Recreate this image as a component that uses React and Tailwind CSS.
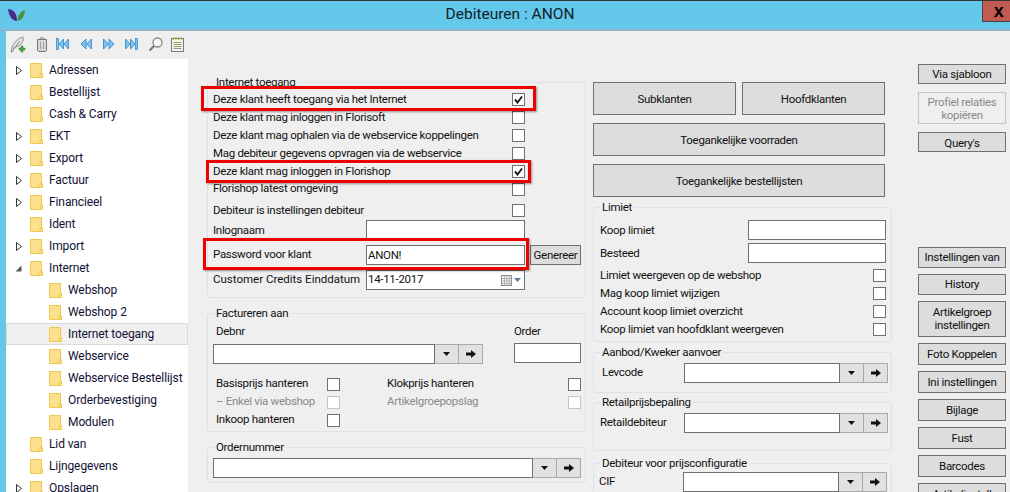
const treeItems = [
  { label: "Adressen", arrow: "closed" },
  { label: "Bestellijst" },
  { label: "Cash & Carry" },
  { label: "EKT", arrow: "closed" },
  { label: "Export", arrow: "closed" },
  { label: "Factuur", arrow: "closed" },
  { label: "Financieel", arrow: "closed" },
  { label: "Ident" },
  { label: "Import", arrow: "closed" },
  { label: "Internet", arrow: "open" },
  { label: "Webshop", child: true },
  { label: "Webshop 2", child: true },
  { label: "Internet toegang", child: true, selected: true },
  { label: "Webservice", child: true },
  { label: "Webservice Bestellijst", child: true },
  { label: "Orderbevestiging", child: true },
  { label: "Modulen", child: true },
  { label: "Lid van" },
  { label: "Lijngegevens" },
  { label: "Opslagen", arrow: "closed" },
]

function Folder() {
  return (
    <svg width="13" height="15" viewBox="0 0 13 15" className="shrink-0">
      <path d="M0.5 0.5H11.5V10.5H12.5V14.5H0.5Z" fill="#fde08d" stroke="#efc94c" />
      <path d="M10 14V11H12" fill="none" stroke="#efc94c" />
    </svg>
  )
}

function TreeRow({ item }) {
  return (
    <div
      className={`h-[22px] flex items-center border ${
        item.selected ? "bg-[#f0f0f0] border-[#dadada]" : "border-transparent"
      }`}
    >
      <div className={`flex items-center shrink-0 ${item.child ? "w-[42px]" : "w-[23px]"}`}>
        {item.arrow === "closed" && (
          <svg width="6" height="9" viewBox="0 0 6 9" className="ml-[9px]">
            <path d="M0.5 0.5L5.5 4.5L0.5 8.5Z" fill="white" stroke="#333" />
          </svg>
        )}
        {item.arrow === "open" && (
          <svg width="7" height="7" viewBox="0 0 7 7" className="ml-[8px]">
            <path d="M6.5 0.5V6.5H0.5Z" fill="#595959" />
          </svg>
        )}
      </div>
      <Folder />
      <span className="ml-[6px] text-[12px] tracking-[-0.1px] text-[#111133] whitespace-nowrap">
        {item.label}
      </span>
    </div>
  )
}

function ToolbarIcons() {
  return (
    <div className="h-[28px] flex items-center pl-[4px] pb-[2px] shrink-0">
      <svg width="16" height="17" viewBox="0 0 16 17">
        <path d="M1 16C2 9 6 3 13 1C14 5 11 10 5 11L2 16Z" fill="#e6e6e6" stroke="#8a8a8a" />
        <path d="M3 14L10 5" stroke="#8a8a8a" fill="none" />
        <path d="M11 10H13V12H15V14H13V16H11V14H9V12H11Z" fill="#45a846" stroke="#2d7d32" strokeWidth="0.5" />
      </svg>
      <svg width="10" height="15" viewBox="0 0 10 15" className="ml-[11px]">
        <path d="M3 1H7V2.5H3Z" fill="none" stroke="#888" />
        <path d="M0.5 2.5H9.5V13L8.5 14.5H1.5L0.5 13Z" fill="#d8d8d2" stroke="#777" />
        <path d="M3.5 5V12M6.5 5V12" stroke="#a0a0a0" />
      </svg>
      <svg width="13" height="12" viewBox="0 0 13 12" className="ml-[9px]">
        <rect x="0.5" y="0.5" width="2" height="11" fill="#7cc4ee" stroke="#2a83c9" strokeWidth="0.7" />
        <path d="M7.5 1V11L3 6ZM12.5 1V11L8 6Z" fill="#7cc4ee" stroke="#2a83c9" strokeWidth="0.8" />
      </svg>
      <svg width="12" height="12" viewBox="0 0 12 12" className="ml-[11px]">
        <path d="M6 1V11L1 6ZM11.5 1V11L6.5 6Z" fill="#7cc4ee" stroke="#2a83c9" strokeWidth="0.8" />
      </svg>
      <svg width="12" height="12" viewBox="0 0 12 12" className="ml-[11px]">
        <path d="M0.5 1V11L5.5 6ZM6 1V11L11 6Z" fill="#7cc4ee" stroke="#2a83c9" strokeWidth="0.8" />
      </svg>
      <svg width="13" height="12" viewBox="0 0 13 12" className="ml-[10px]">
        <path d="M0.5 1V11L5 6ZM5.5 1V11L10 6Z" fill="#7cc4ee" stroke="#2a83c9" strokeWidth="0.8" />
        <rect x="10.5" y="0.5" width="2" height="11" fill="#7cc4ee" stroke="#2a83c9" strokeWidth="0.7" />
      </svg>
      <svg width="15" height="15" viewBox="0 0 15 15" className="ml-[10px]">
        <circle cx="9.5" cy="5.5" r="4.5" fill="#f4f4f4" stroke="#888" strokeWidth="1.3" />
        <path d="M6 9L1.5 13.5" stroke="#777" strokeWidth="2.2" />
      </svg>
      <svg width="13" height="15" viewBox="0 0 13 15" className="ml-[8px]">
        <rect x="0.5" y="1.5" width="12" height="13" fill="#fdf6cf" stroke="#5d7ea6" />
        <path d="M2.5 0V3M5 0V3M7.5 0V3M10 0V3" stroke="#c9a227" />
        <path d="M2.5 5.5H10.5M2.5 7.5H10.5M2.5 9.5H10.5M2.5 11.5H10.5" stroke="#8a94a0" />
      </svg>
    </div>
  )
}

function Check({ checked, disabled }) {
  return (
    <div
      className={`w-[13px] h-[13px] shrink-0 border bg-white flex items-center justify-center ${
        disabled ? "border-[#c4c4c4]" : "border-[#707070]"
      }`}
    >
      {checked && (
        <svg width="9" height="9" viewBox="0 0 9 9">
          <path d="M1 4.5L3.5 7.5L8 1.5" fill="none" stroke="#222" strokeWidth="2" />
        </svg>
      )}
    </div>
  )
}

function Group({ title, className, children }) {
  return (
    <div className={`relative border border-[#dce2e7] rounded-[3px] ${className}`}>
      <span className="absolute -top-[9px] left-[6px] px-[2px] bg-[#efefef] leading-[16px] whitespace-nowrap">
        {title}
      </span>
      {children}
    </div>
  )
}

function CheckRow({ label, checked, textClass = "pt-[2px]", className = "" }) {
  return (
    <div className={`h-[18px] flex items-center justify-between ${className}`}>
      <span className={`whitespace-nowrap ${textClass}`}>{label}</span>
      <Check checked={checked} />
    </div>
  )
}

function TextBox({ className, children }) {
  return (
    <div className={`h-[20px] bg-white border border-[#707070] flex items-center px-[1px] ${className}`}>
      {children}
    </div>
  )
}

function Lookup({ inputWidth }) {
  return (
    <div className="flex h-[20px]">
      <TextBox className={inputWidth} />
      <div className="w-[24px] border border-l-0 border-[#a8a8a8] bg-[#e1e1e1] flex items-center justify-center">
        <svg width="7" height="4" viewBox="0 0 7 4">
          <path d="M0 0H7L3.5 4Z" fill="#111" />
        </svg>
      </div>
      <div className="w-[24px] border border-l-0 border-[#a8a8a8] bg-[#e1e1e1] flex items-center justify-center">
        <svg width="10" height="8" viewBox="0 0 10 8">
          <path d="M0 2.5H5V0L10 4L5 8V5.5H0Z" fill="#111" />
        </svg>
      </div>
    </div>
  )
}

function Btn({ className = "", disabled, children }) {
  return (
    <div
      className={`border flex items-center justify-center text-center leading-[13px] ${
        disabled ? "bg-[#efefef] border-[#c4c4c4] text-[#8a8a8a]" : "bg-[#dddddd] border-[#707070]"
      } ${className}`}
    >
      {children}
    </div>
  )
}

function LeftColumn() {
  return (
    <div className="w-[379px] ml-[19px] pt-[51px] shrink-0">
      <Group title="Internet toegang" className="h-[216px] pl-[5px] pt-[7px]">
        <div className="w-[312px]">
          <CheckRow label="Deze klant heeft toegang via het Internet" checked />
          <CheckRow label="Deze klant mag inloggen in Florisoft" />
          <CheckRow label="Deze klant mag ophalen via de webservice koppelingen" />
          <CheckRow label="Mag debiteur gegevens opvragen via de webservice" />
          <CheckRow label="Deze klant mag inloggen in Florishop" checked />
          <CheckRow label="Florishop latest omgeving" textClass="" />
          <CheckRow label="Debiteur is instellingen debiteur" className="mt-[3px]" />
        </div>
        <div className="flex items-center h-[20px] mt-[1px]">
          <span className="w-[153px] whitespace-nowrap pt-[2px]">Inlognaam</span>
          <TextBox className="w-[159px]" />
        </div>
        <div className="flex items-center h-[20px] mt-[5px]">
          <span className="w-[153px] whitespace-nowrap">Password voor klant</span>
          <TextBox className="w-[159px]">
            <span className="pt-[2px]">ANON!</span>
          </TextBox>
          <Btn className="w-[51px] h-[20px] ml-[5px]">Genereer</Btn>
        </div>
        <div className="flex items-center h-[20px] mt-[5px]">
          <span className="w-[153px] whitespace-nowrap tracking-normal">Customer Credits Einddatum</span>
          <TextBox className="w-[159px] justify-between pr-[3px]">
            <span>14-11-2017</span>
            <span className="flex items-center gap-[2px]">
              <svg width="11" height="11" viewBox="0 0 11 11">
                <rect x="0.5" y="0.5" width="10" height="10" fill="#eee" stroke="#8c8c8c" />
                <path d="M0 3.5H11M0 6H11M0 8.5H11M3.5 1V11M6 1V11M8.5 1V11" stroke="#a4a4a4" strokeWidth="0.7" />
              </svg>
              <svg width="7" height="4" viewBox="0 0 7 4">
                <path d="M0 0H7L3.5 4Z" fill="#5a7aa0" />
              </svg>
            </span>
          </TextBox>
        </div>
      </Group>

      <Group title="Factureren aan" className="h-[119px] mt-[15px] pl-[5px]">
        <div className="flex justify-between pr-[4px] pt-[9px]">
          <div className="flex-1">
            <div className="h-[18px] pl-[3px] flex items-center">Debnr</div>
            <div className="mt-[3px]">
              <Lookup inputWidth="w-[222px]" />
            </div>
          </div>
          <div className="w-[67px]">
            <div className="h-[18px] flex items-center">Order</div>
            <TextBox className="w-[67px] mt-[2px]" />
          </div>
        </div>
        <div className="flex pl-[3px] pt-[11px]">
          <div className="w-[124px]">
            <CheckRow label="Basisprijs hanteren" textClass="" />
            <div className="h-[18px] flex items-center justify-between text-[#8a8a8a]">
              <span className="whitespace-nowrap">– Enkel via webshop</span>
              <Check disabled />
            </div>
            <CheckRow label="Inkoop hanteren" textClass="" />
          </div>
          <div className="w-[194px] ml-[47px]">
            <CheckRow label="Klokprijs hanteren" textClass="" />
            <div className="h-[18px] flex items-center justify-between text-[#8a8a8a]">
              <span>Artikelgroepopslag</span>
              <Check disabled />
            </div>
          </div>
        </div>
      </Group>

      <Group title="Ordernummer" className="h-[36px] mt-[15px] pl-[5px] pt-[10px]">
        <Lookup inputWidth="w-[320px]" />
      </Group>
    </div>
  )
}

function MiddleColumn() {
  return (
    <div className="w-[299px] ml-[7px] pt-[51px] shrink-0">
      <div className="flex gap-[6px] w-[292px]">
        <Btn className="w-[143px] h-[33px] pt-[2px]">Subklanten</Btn>
        <Btn className="w-[143px] h-[33px] pt-[2px]">Hoofdklanten</Btn>
      </div>
      <Btn className="w-[292px] h-[33px] mt-[8px] pt-[2px]">Toegankelijke voorraden</Btn>
      <Btn className="w-[292px] h-[33px] mt-[8px] pt-[2px]">Toegankelijke bestellijsten</Btn>

      <Group title="Limiet" className="h-[135px] mt-[10px] pl-[6px] pt-[12px]">
        <div className="w-[286px]">
          <div className="flex items-center justify-between h-[20px]">
            <span className="pt-[2px]">Koop limiet</span>
            <TextBox className="w-[138px]" />
          </div>
          <div className="flex items-center justify-between h-[20px] mt-[3px]">
            <span className="pt-[2px]">Besteed</span>
            <TextBox className="w-[138px]" />
          </div>
          <CheckRow label="Limiet weergeven op de webshop" className="mt-[3px]" />
          <CheckRow label="Mag koop limiet wijzigen" />
          <CheckRow label="Account koop limiet overzicht" />
          <CheckRow label="Koop limiet van hoofdklant weergeven" />
        </div>
      </Group>

      <Group title="Aanbod/Kweker aanvoer" className="h-[41px] mt-[10px] pl-[8px] pt-[10px]">
        <div className="flex items-center">
          <span className="w-[82px]">Levcode</span>
          <Lookup inputWidth="w-[156px]" />
        </div>
      </Group>

      <Group title="Retailprijsbepaling" className="h-[49px] mt-[9px] pl-[6px] pt-[10px]">
        <div className="flex items-center">
          <span className="w-[84px]">Retaildebiteur</span>
          <Lookup inputWidth="w-[156px]" />
        </div>
      </Group>

      <Group title="Debiteur voor prijsconfiguratie" className="h-[60px] mt-[12px] pl-[5px] pt-[8px]">
        <div className="flex items-center">
          <span className="w-[84px]">CIF</span>
          <Lookup inputWidth="w-[156px]" />
        </div>
      </Group>
    </div>
  )
}

function RightColumn() {
  return (
    <div className="w-[88px] ml-[26px] pt-[33px] shrink-0">
      <Btn className="h-[20px]">Via sjabloon</Btn>
      <Btn disabled className="h-[32px] mt-[8px] pt-[2px]">
        Profiel relaties
        <br />
        kopiëren
      </Btn>
      <Btn className="h-[20px] mt-[8px] pt-[2px]">Query's</Btn>
      <Btn className="h-[21px] mt-[95px]">Instellingen van</Btn>
      <Btn className="h-[21px] mt-[6px]">History</Btn>
      <Btn className="h-[36px] mt-[6px]">
        Artikelgroep
        <br />
        instellingen
      </Btn>
      <Btn className="h-[22px] mt-[6px]">Foto Koppelen</Btn>
      <Btn className="h-[22px] mt-[6px]">Ini instellingen</Btn>
      <Btn className="h-[22px] mt-[6px]">Bijlage</Btn>
      <Btn className="h-[22px] mt-[6px]">Fust</Btn>
      <Btn className="h-[22px] mt-[6px]">Barcodes</Btn>
      <Btn className="h-[22px] mt-[6px]">Artikelinstell</Btn>
    </div>
  )
}

export default function App() {
  return (
    <div className="relative w-[1010px] h-[492px] overflow-hidden bg-[#efefef] text-[11.5px] text-[#111] font-['Roboto',sans-serif] tracking-[-0.3px]">
      <div className="relative h-[31px] bg-[#64c8ea] border-t border-[#333] border-b-[2px] border-b-[#8fb5c6] flex items-center justify-center pl-[10px]">
        <svg width="17" height="12" viewBox="0 0 17 12" className="absolute left-[8px] top-[8px]">
          <path d="M0 0C5 0 9 4 9 12C4 12 1 7 0 0Z" fill="#4b2a8c" />
          <path d="M17 1C17 6 14 11 10 12C9 7 12 3 17 1Z" fill="#4f8f3c" />
        </svg>
        <span className="text-[15.5px] tracking-normal text-[#10222b]">Debiteuren : ANON</span>
        <div className="absolute right-0 top-0 w-[28px] h-[21px] bg-[#c15a50] border-l border-b border-[#444] flex items-center justify-center pl-[4px] text-[18px] leading-none font-bold text-black font-['Liberation_Sans',sans-serif]">
          x
        </div>
      </div>

      <div className="flex h-[461px]">
        <div className="w-[6px] bg-[#64c8ea] shrink-0" />
        <div className="w-[182px] shrink-0 flex flex-col">
          <ToolbarIcons />
          <div className="bg-white flex-1">
            {treeItems.map((item) => (
              <TreeRow key={item.label} item={item} />
            ))}
          </div>
        </div>
        <LeftColumn />
        <MiddleColumn />
        <RightColumn />
      </div>

      {/* rode kaders uit de schermafbeelding */}
      <div className="absolute left-[201px] top-[86px] w-[335px] h-[25px] border-[3px] border-[#ee0000] shadow-[1px_1px_2px_rgba(0,0,0,0.4)]" />
      <div className="absolute left-[206px] top-[160px] w-[325px] h-[23px] border-[3px] border-[#ee0000] shadow-[1px_1px_2px_rgba(0,0,0,0.4)]" />
      <div className="absolute left-[203px] top-[238px] w-[326px] h-[32px] border-[3px] border-[#ee0000] shadow-[1px_1px_2px_rgba(0,0,0,0.4)]" />
    </div>
  )
}
